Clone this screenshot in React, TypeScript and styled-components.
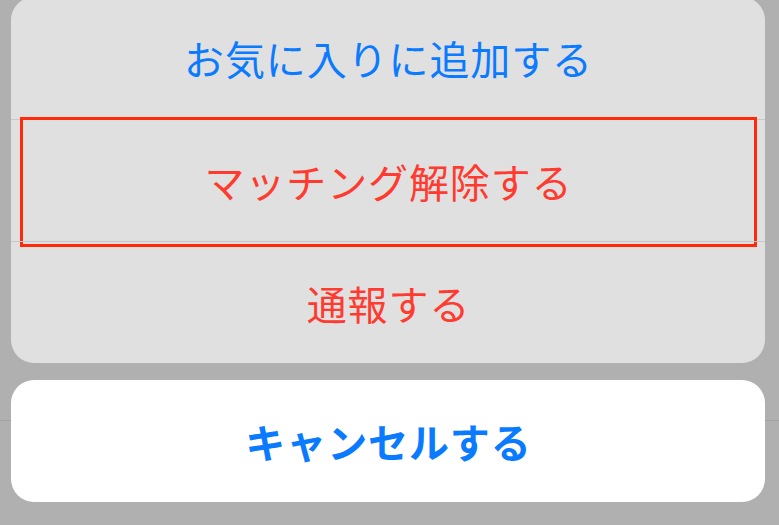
import * as React from 'react'
import styled, { createGlobalStyle } from 'styled-components'

const colors = {
  backdrop: '#b1b0b0',
  backdropLine: '#a4a3a3',
  sheet: '#e0e0e0',
  separator: '#c8c8c8',
  blue: '#0a7aff',
  red: '#ff3b30',
  highlight: '#ff2a0a',
}

const GlobalStyle = createGlobalStyle`
  html, body {
    margin: 0;
    padding: 0;
    height: 100%;
  }
  body {
    background:
      linear-gradient(${colors.backdropLine}, ${colors.backdropLine}) 0 420px / 100% 1px no-repeat,
      ${colors.backdrop};
    font-family: "Noto Sans CJK JP", "Noto Sans", sans-serif;
    overflow: hidden;
  }
`

const Screen = styled.div`
  width: 779px;
  height: 525px;
  padding: 0 14px 0 11px;
  box-sizing: border-box;
  display: flex;
  flex-direction: column;
  gap: 17px;
`

const ActionGroup = styled.div`
  margin-top: -3px;
  background: ${colors.sheet};
  border-radius: 23px;
  display: flex;
  flex-direction: column;
`

const ActionRow = styled.button<{ $danger?: boolean; $bold?: boolean }>`
  position: relative;
  height: 122px;
  flex: none;
  display: flex;
  align-items: center;
  justify-content: center;
  border: 0;
  background: transparent;
  padding: 0 0 0 1px;
  font-family: inherit;
  font-size: 40px;
  letter-spacing: 0.9px;
  font-weight: ${p => (p.$bold ? 700 : 400)};
  color: ${p => (p.$danger ? colors.red : colors.blue)};
  & + & {
    border-top: 1px solid ${colors.separator};
  }
`

const CancelCard = styled.div`
  background: #ffffff;
  border-radius: 23px;
  display: flex;
  flex-direction: column;
`

// red annotation frame drawn over the selected row
const Highlight = styled.span`
  position: absolute;
  top: -3px;
  left: 9px;
  right: 8px;
  bottom: -6px;
  border: 3px solid ${colors.highlight};
  pointer-events: none;
`

const App = () => {
  return (
    <>
      <GlobalStyle />
      <Screen>
        <ActionGroup>
          <ActionRow>お気に入りに追加する</ActionRow>
          <ActionRow $danger>
            マッチング解除する
            <Highlight />
          </ActionRow>
          <ActionRow $danger>通報する</ActionRow>
        </ActionGroup>
        <CancelCard>
          <ActionRow $bold>キャンセルする</ActionRow>
        </CancelCard>
      </Screen>
    </>
  )
}

export default App
